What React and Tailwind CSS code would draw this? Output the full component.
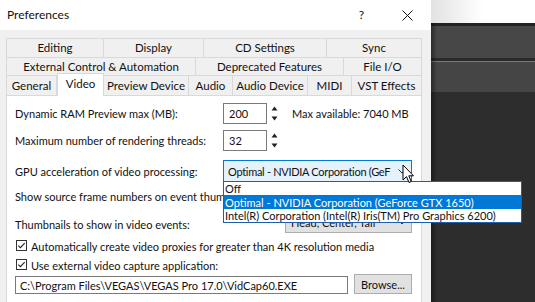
import React from "react";

function Spinner() {
  return (
    <div className="ml-[4px] flex h-[21px] w-[7px] flex-col items-center justify-between py-[3px]">
      <svg width="7" height="5" viewBox="0 0 7 5"><path d="M0.5 4.5 L3.5 0.5 L6.5 4.5 Z" fill="#222" /></svg>
      <svg width="7" height="5" viewBox="0 0 7 5"><path d="M0.5 0.5 L3.5 4.5 L6.5 0.5 Z" fill="#222" /></svg>
    </div>
  );
}

function Chevron({ color = "#333" }) {
  return (
    <svg width="8" height="5" viewBox="0 0 8 5">
      <path d="M0.5 0.5 L4 4 L7.5 0.5" fill="none" stroke={color} strokeWidth="1" />
    </svg>
  );
}

function CheckBox() {
  return (
    <svg width="11" height="11" viewBox="0 0 11 11" className="shrink-0">
      <rect x="0.5" y="0.5" width="10" height="10" fill="#fff" stroke="#333" />
      <path d="M2.3 5.6 L4.4 7.7 L8.7 3.2" fill="none" stroke="#222" strokeWidth="1.1" />
    </svg>
  );
}

function Tab({ w, children, first }) {
  return (
    <div
      className={`flex h-full shrink-0 items-center justify-center whitespace-nowrap border-t border-r border-[#d9d9d9] bg-[#f0f0f0] ${first ? "border-l" : ""}`}
      style={{ width: w }}
    >
      {children}
    </div>
  );
}

export default function App() {
  return (
    <div className="relative flex h-[302px] w-[535px] overflow-hidden whitespace-nowrap font-['Lato',sans-serif] text-[11px] leading-none text-[#111]">
      {/* Dialog */}
      <div className="flex h-[302px] w-[431px] shrink-0 flex-col overflow-hidden bg-[#f0f0f0]">
        {/* title bar */}
        <div className="flex h-[30px] shrink-0 items-center bg-white pl-[7px]">
          <span className="text-[12px]">Preferences</span>
          <span className="ml-auto mr-[38px] text-[12px]">?</span>
          <svg width="11" height="11" viewBox="0 0 11 11" className="mr-[18px]">
            <path d="M0.5 0.5 L10.5 10.5 M10.5 0.5 L0.5 10.5" stroke="#111" strokeWidth="1" />
          </svg>
        </div>

        {/* tabs */}
        <div className="mx-[6px] mt-[8px] flex w-[416px] shrink-0 flex-col text-[11.5px]">
          <div className="flex h-[19px] shrink-0">
            <Tab w={98} first>Editing</Tab>
            <Tab w={100}>Display</Tab>
            <Tab w={123}>CD Settings</Tab>
            <Tab w={95}>Sync</Tab>
          </div>
          <div className="flex h-[18px] shrink-0">
            <Tab w={190} first>External Control &amp; Automation</Tab>
            <Tab w={148}>Deprecated Features</Tab>
            <Tab w={78}>File I/O</Tab>
          </div>
          <div className="flex h-[20px] shrink-0 items-end">
            <Tab w={51} first>General</Tab>
            <div className="relative z-10 mb-[-1px] flex h-[23px] w-[47px] shrink-0 items-center justify-center border-x border-t border-[#d9d9d9] bg-white pb-[3px]">
              Video
            </div>
            <Tab w={85}>Preview Device</Tab>
            <Tab w={44}>Audio</Tab>
            <Tab w={75}>Audio Device</Tab>
            <Tab w={44}>MIDI</Tab>
            <Tab w={70}>VST Effects</Tab>
          </div>

          {/* panel */}
          <div className="flex h-[230px] shrink-0 flex-col border border-[#d9d9d9] bg-white pl-[8px] pt-[7px] text-[11px]">
            <div className="flex h-[21px] shrink-0 items-center">
              <span className="w-[208px]">Dynamic RAM Preview max (MB):</span>
              <div className="flex h-[21px] w-[44px] items-center border border-[#7a7a7a] pl-[5px]">200</div>
              <Spinner />
              <span className="ml-[14px]">Max available: 7040 MB</span>
            </div>
            <div className="mt-[6px] flex h-[21px] shrink-0 items-center">
              <span className="w-[208px]">Maximum number of rendering threads:</span>
              <div className="flex h-[21px] w-[44px] items-center border border-[#7a7a7a] pl-[5px]">32</div>
              <Spinner />
            </div>
            <div className="mt-[9px] flex h-[22px] shrink-0 items-center">
              <span className="w-[208px]">GPU acceleration of video processing:</span>
              <div className="flex h-[22px] w-[189px] items-center overflow-hidden border border-[#0078d7] bg-[#e5f1fb] pl-[4px] pr-[5px]">
                <span className="tracking-[-0.3px]">Optimal - NVIDIA Corporation (GeF</span>
                <span className="ml-auto"><Chevron /></span>
              </div>
            </div>
            <div className="mt-[4px] flex h-[21px] shrink-0 items-center">
              <span className="w-[215px] overflow-hidden">Show source frame numbers on event thumbnails</span>
            </div>
            <div className="mt-[5px] flex h-[21px] shrink-0 items-center">
              <span className="w-[270px] pt-[3px]">Thumbnails to show in video events:</span>
              <div className="flex h-[21px] w-[127px] items-center border border-[#adadad] bg-[#e1e1e1] pl-[5px] pr-[5px]">
                <span>Head, Center, Tail</span>
                <span className="ml-auto"><Chevron /></span>
              </div>
            </div>
            <div className="mt-[2px] flex h-[20px] shrink-0 items-center">
              <span className="ml-[1px] mr-[4px]"><CheckBox /></span>
              <span className="pt-[2px]">Automatically create video proxies for greater than 4K resolution media</span>
            </div>
            <div className="flex h-[19px] shrink-0 items-center">
              <span className="ml-[1px] mr-[4px]"><CheckBox /></span>
              <span className="pt-[2px]">Use external video capture application:</span>
            </div>
            <div className="flex h-[20px] shrink-0 items-center">
              <div className="flex h-[18px] w-[333px] items-center self-end border border-[#7a7a7a] pl-[4px]">
                C:\Program Files\VEGAS\VEGAS Pro 17.0\VidCap60.EXE
              </div>
              <div className="ml-[6px] flex h-[20px] w-[58px] items-center justify-center border border-[#adadad] bg-[#e1e1e1]">
                Browse...
              </div>
            </div>
          </div>
        </div>
      </div>

      {/* dark background on right */}
      <div className="relative flex flex-1 flex-col bg-[#2d2d2d]">
        <div className="h-[23px] shrink-0 bg-gradient-to-r from-[#e2e2e2] via-white to-white" />
        <div className="h-[3px] shrink-0 bg-[#232323]" />
        <div className="h-[32px] shrink-0 bg-[#474747]" />
        <div className="h-[3px] shrink-0 bg-[#2a2a2a]" />
        <div className="h-[1px] shrink-0 bg-[#7a7a7a]" />
        <div className="h-[30px] shrink-0 bg-[#454545]" />
        <div className="flex-1 bg-[#2d2d2d]" />
        <div className="absolute bottom-0 left-0 top-[23px] w-[6px] bg-gradient-to-r from-black/40 to-transparent" />
      </div>

      {/* dropdown list (overlay) */}
      <div className="absolute left-[223px] top-[181px] z-20 flex h-[42px] w-[299px] flex-col border border-[#1b5fae] bg-white text-[11px]">
        <div className="flex h-[13px] items-center pl-[1px]">Off</div>
        <div className="flex h-[14px] items-center bg-[#0078d7] pl-[1px] text-white">Optimal - NVIDIA Corporation (GeForce GTX 1650)</div>
        <div className="flex h-[13px] items-center pl-[1px]">Intel(R) Corporation (Intel(R) Iris(TM) Pro Graphics 6200)</div>
      </div>

      {/* mouse cursor */}
      <svg className="absolute left-[402px] top-[164px] z-30" width="13" height="21" viewBox="0 0 13 21">
        <path d="M1 1 L1 16 L4.5 12.6 L7 18.5 L9.2 17.5 L6.8 11.8 L11.5 11.8 Z" fill="#fff" stroke="#000" strokeWidth="1" strokeLinejoin="miter" />
      </svg>
    </div>
  );
}
